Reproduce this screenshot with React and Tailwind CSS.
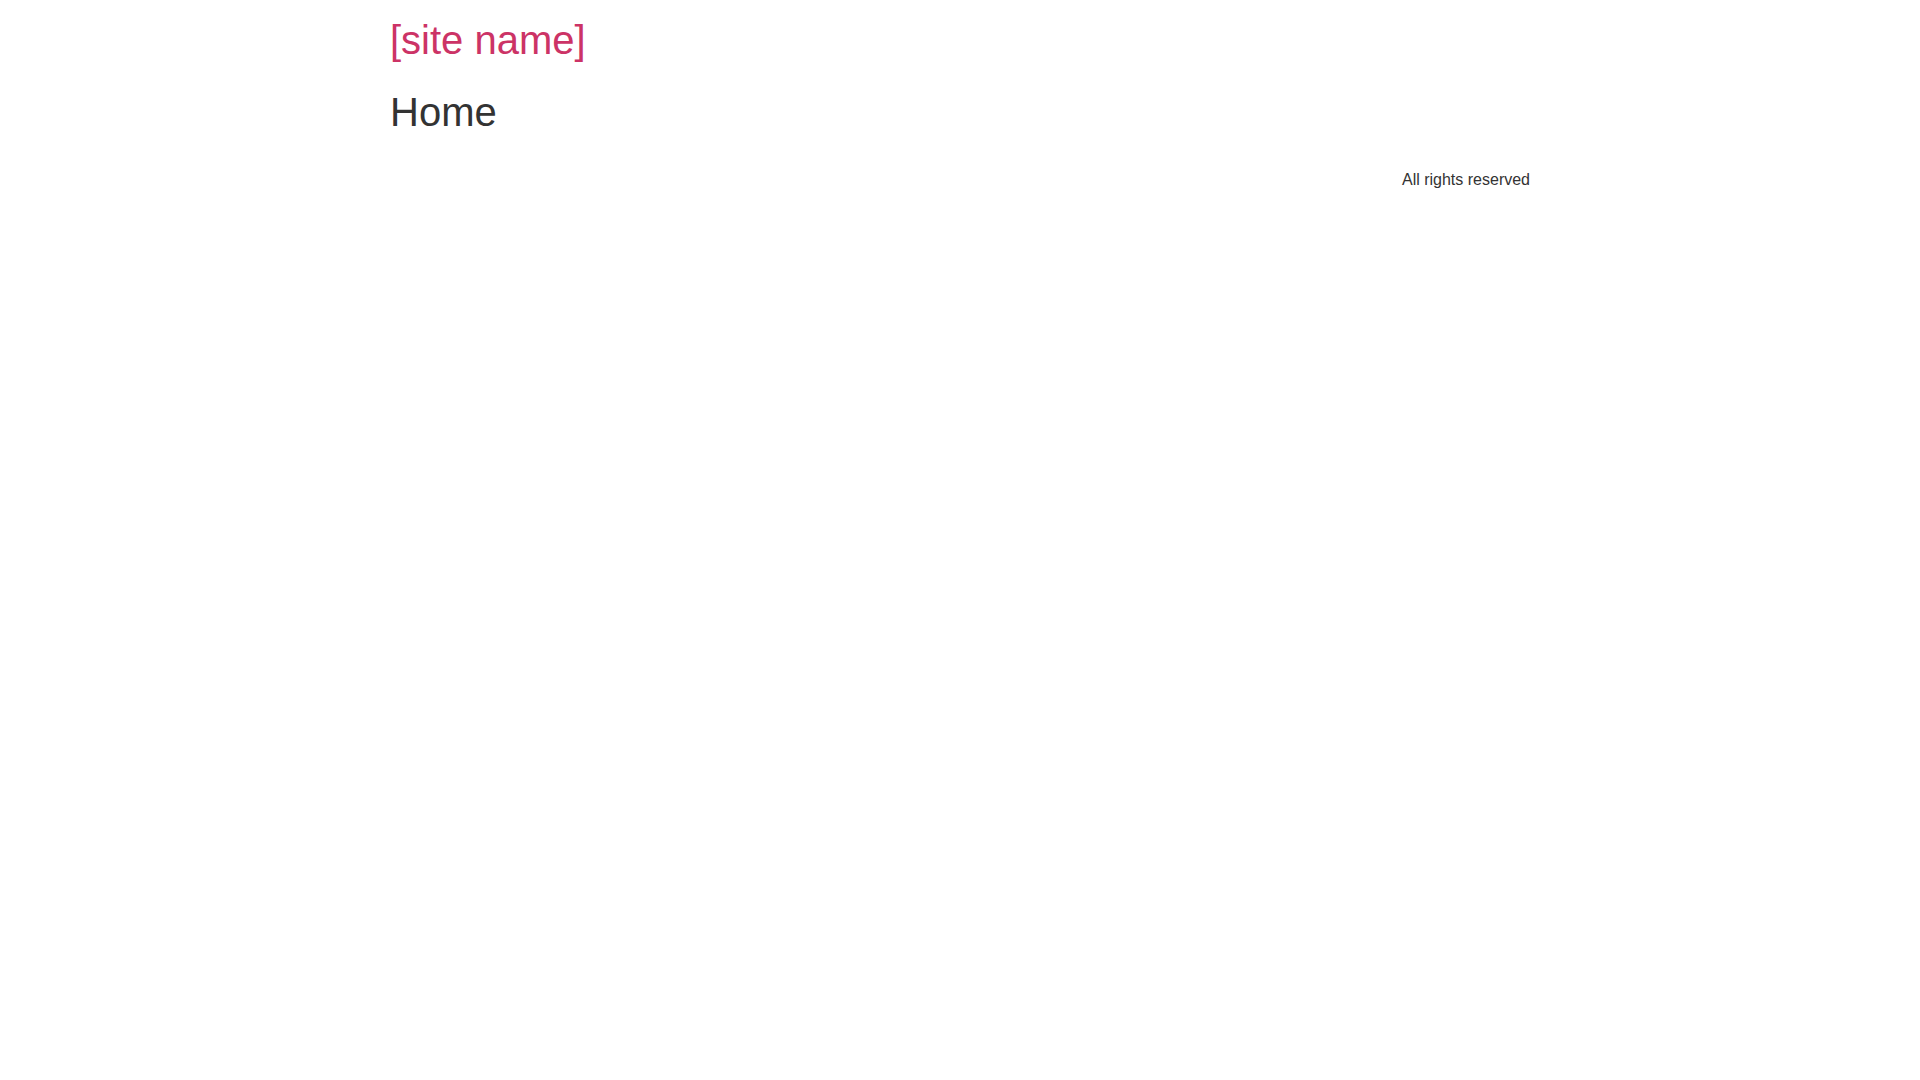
import React from "react";

const Header = () => {
    return (
        <header className="py-4">
            <h1 className="text-[40px] leading-[48px]">
                <a href="#" className="text-[#cc3366]">[site name]</a>
            </h1>
        </header>
    );
};

const Footer = () => {
    return (
        <footer className="flex justify-end py-4">
            <p className="text-base leading-6">All rights reserved</p>
        </footer>
    );
};

const App = () => {
    return (
        <div className="mx-auto max-w-[1140px] bg-white font-[Arial,'Liberation_Sans',sans-serif] text-[#333333]">
            <Header />
            <main>
                <h1 className="mt-2 mb-4 text-[40px] leading-[48px]">Home</h1>
            </main>
            <Footer />
        </div>
    );
};

export default App;
